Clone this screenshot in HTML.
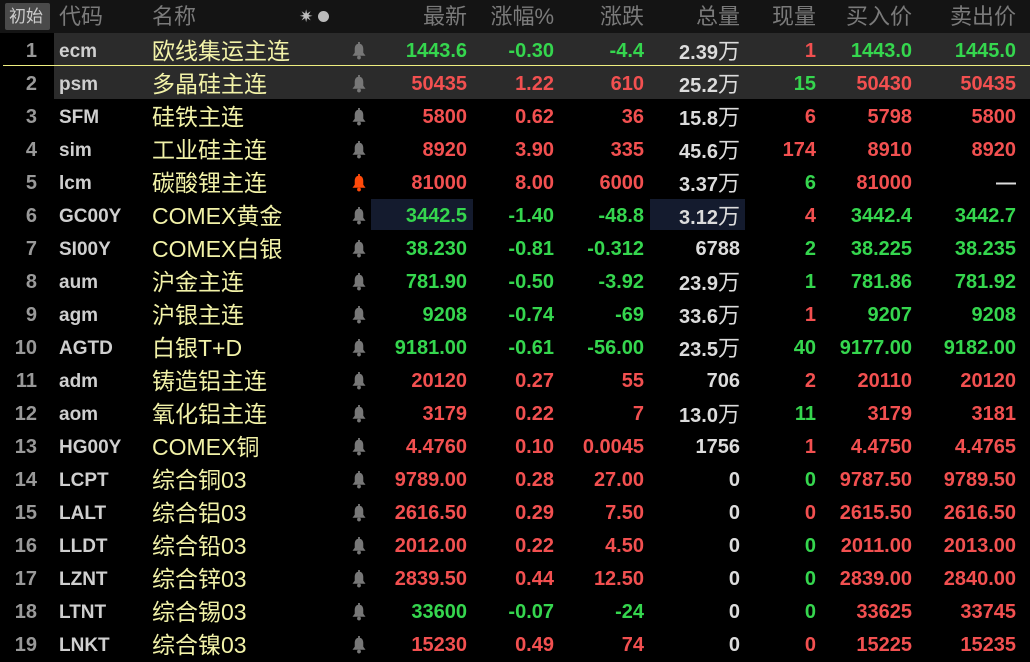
<!DOCTYPE html>
<html><head><meta charset="utf-8"><style>
body{margin:0;width:1030px;height:661px;background:#000;overflow:hidden;font-family:"Liberation Sans","Noto Sans CJK SC",sans-serif;position:relative}
.hdr{position:absolute;left:0;top:0;width:1030px;height:33px;background:#141414}
.c{position:absolute;white-space:nowrap;line-height:33px}
.row .c{top:2px}
.h{color:#7a7a7a;font-size:22px}
.row{position:absolute;left:0;width:1030px;height:33px}
.n{font-size:20px;font-weight:bold}
.cj{font-size:23px}
.r{color:#f25050}.g{color:#35d64e}.w{color:#dcdcdc}.y{color:#f2f2a8}
.bell{position:absolute;left:351px;top:9px;width:16px;height:18px}
</style></head><body>
<div class="hdr"></div>
<div style="position:absolute;left:5px;top:3px;width:45px;height:27px;background:#4a4a4a;border-radius:2px"></div>
<div class="c h" style="left:9px;top:0;font-size:17px;color:#ccc">初始</div>
<div class="c h" style="left:59px;top:0">代码</div>
<div class="c h" style="left:152px;top:0">名称</div>
<div class="c" style="left:299px;top:0;color:#bbb;font-size:17px">✷</div>
<div style="position:absolute;left:318px;top:11px;width:11px;height:11px;border-radius:50%;background:#bbb"></div>
<div class="c h" style="right:563px;top:0">最新</div>
<div class="c h" style="right:476px;top:0">涨幅%</div>
<div class="c h" style="right:386px;top:0">涨跌</div>
<div class="c h" style="right:290px;top:0">总量</div>
<div class="c h" style="right:214px;top:0">现量</div>
<div class="c h" style="right:118px;top:0">买入价</div>
<div class="c h" style="right:14px;top:0">卖出价</div>
<div id="rows"></div>
<script>
const D=[
["ecm","欧线集运主连","g","1443.6","-0.30","-4.4","2.39万","r","1","g","1443.0","1445.0"],
["psm","多晶硅主连","r","50435","1.22","610","25.2万","g","15","r","50430","50435"],
["SFM","硅铁主连","r","5800","0.62","36","15.8万","r","6","r","5798","5800"],
["sim","工业硅主连","r","8920","3.90","335","45.6万","r","174","r","8910","8920"],
["lcm","碳酸锂主连","r","81000","8.00","6000","3.37万","g","6","r","81000","—"],
["GC00Y","COMEX黄金","g","3442.5","-1.40","-48.8","3.12万","r","4","g","3442.4","3442.7"],
["SI00Y","COMEX白银","g","38.230","-0.81","-0.312","6788","g","2","g","38.225","38.235"],
["aum","沪金主连","g","781.90","-0.50","-3.92","23.9万","g","1","g","781.86","781.92"],
["agm","沪银主连","g","9208","-0.74","-69","33.6万","r","1","g","9207","9208"],
["AGTD","白银T+D","g","9181.00","-0.61","-56.00","23.5万","g","40","g","9177.00","9182.00"],
["adm","铸造铝主连","r","20120","0.27","55","706","r","2","r","20110","20120"],
["aom","氧化铝主连","r","3179","0.22","7","13.0万","g","11","r","3179","3181"],
["HG00Y","COMEX铜","r","4.4760","0.10","0.0045","1756","r","1","r","4.4750","4.4765"],
["LCPT","综合铜03","r","9789.00","0.28","27.00","0","g","0","r","9787.50","9789.50"],
["LALT","综合铝03","r","2616.50","0.29","7.50","0","r","0","r","2615.50","2616.50"],
["LLDT","综合铅03","r","2012.00","0.22","4.50","0","g","0","r","2011.00","2013.00"],
["LZNT","综合锌03","r","2839.50","0.44","12.50","0","g","0","r","2839.00","2840.00"],
["LTNT","综合锡03","g","33600","-0.07","-24","0","g","0","r","33625","33745"],
["LNKT","综合镍03","r","15230","0.49","74","0","r","0","r","15225","15235"]];
let h="";
D.forEach((d,i)=>{const t=33*(i+1);
h+=`<div class="row" style="top:${t}px">`;
if(i<2)h+=`<div style="position:absolute;left:54px;top:0;right:0;height:33px;background:#2b2b2b"></div>`;
if(i==5)h+=`<div style="position:absolute;left:371px;top:1px;width:102px;height:31px;background:#141b2e"></div><div style="position:absolute;left:650px;top:1px;width:95px;height:31px;background:#141b2e"></div>`;
if(i==0)h+=`<div style="position:absolute;left:3px;top:32px;right:0;height:1px;background:#eeee80"></div>`;
const last=d[11]=="—";
const bc=i==4?"#ff4a0a":"#777";
h+=`<div class="c n" style="right:${1030-37}px;color:#999;width:40px;text-align:right;left:auto">${i+1}</div>
<div class="c n" style="left:59px;color:#cfcfcf;font-size:19px">${d[0]}</div>
<div class="c cj y" style="left:152px">${d[1]}</div>
<svg class="bell" viewBox="0 0 14 16"><path d="M7 1.5C4.3 1.5 3.2 3.6 3.2 6.2V9.5L1.2 12.2H12.8L10.8 9.5V6.2C10.8 3.6 9.7 1.5 7 1.5Z" fill="${bc}"/><circle cx="7" cy="13.8" r="1.7" fill="${bc}"/><rect x="6.2" y="0" width="1.6" height="2.2" fill="${bc}"/></svg>
<div class="c n ${d[2]}" style="right:563px">${d[3]}</div>
<div class="c n ${d[2]}" style="right:476px">${d[4]}</div>
<div class="c n ${d[2]}" style="right:386px">${d[5]}</div>
<div class="c n w" style="right:290px">${d[6].replace("万",'<span style="font-weight:normal;font-size:22px">万</span>')}</div>
<div class="c n ${d[7]}" style="right:214px">${d[8]}</div>
<div class="c n ${d[9]}" style="right:118px">${d[10]}</div>
<div class="c n ${last?'w':d[9]}" style="right:14px">${d[11]}</div></div>`;});
document.getElementById("rows").innerHTML=h;
</script>
</body></html>
